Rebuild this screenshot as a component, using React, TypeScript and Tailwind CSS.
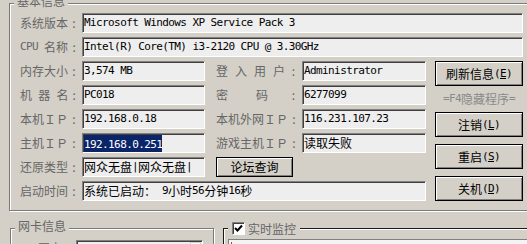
import React from 'react';

const mono = "font-['DejaVu_Sans_Mono',monospace] text-[11px] tracking-[-0.6px]";

function M({ children }: { children: React.ReactNode }) {
  return <span className={mono}>{children}</span>;
}

function Field({ w, children }: { w: string; children?: React.ReactNode }) {
  return (
    <div
      className={`flex h-[20px] shrink-0 items-center overflow-hidden whitespace-pre border border-t-[#808080] border-l-[#808080] border-r-white border-b-white bg-[#eeeeee] pl-[1px] text-[12px] leading-[14px] text-black shadow-[inset_1px_1px_0_#404040] ${w}`}
    >
      {children}
    </div>
  );
}

function Btn({ className, children }: { className: string; children: React.ReactNode }) {
  return (
    <div
      className={`flex shrink-0 items-center justify-center whitespace-pre border border-black bg-[#d4d0c8] text-[12px] leading-[14px] text-black shadow-[inset_1px_1px_0_#fff,inset_-1px_-1px_0_#808080] ${className}`}
    >
      {children}
    </div>
  );
}

// left labels: 60px + 2px gap
function LL({ children }: { children: React.ReactNode }) {
  return (
    <div className="mr-[2px] flex w-[60px] shrink-0 items-center whitespace-pre text-[12px] leading-[14px] text-[#666]">
      {children}
      <span className="ml-auto w-[12px] text-center">:</span>
    </div>
  );
}

// right labels: 84px + 2px gap
function RL({ children }: { children: React.ReactNode }) {
  return (
    <div className="mr-[2px] flex w-[84px] shrink-0 items-center whitespace-pre text-[12px] leading-[14px] text-[#666]">
      {children}
      <span className="ml-auto w-[13px] text-center">:</span>
    </div>
  );
}

function Mn({ k }: { k: string }) {
  return (
    <M>
      (<span className="underline">{k}</span>)
    </M>
  );
}

export default function App() {
  return (
    <div className="relative h-[244px] w-[527px] overflow-hidden bg-[#d4d0c8] font-['Noto_Sans_CJK_SC',sans-serif]">
      <div className="pl-[9px] pt-[3px]">
        {/* 基本信息 */}
        <div className="relative h-[208px] w-[540px] border border-[#7a7a7a] shadow-[inset_1px_1px_0_#fff,1px_1px_0_#fff]">
          <span className="absolute left-[4px] top-[-9px] bg-[#d4d0c8] px-[3px] text-[12px] leading-[12px] text-[#666]">基本信息</span>

          <div className="pl-[10px] pt-[9px]">
            <div className="flex items-center">
              <LL>系统版本</LL>
              <Field w="w-[441px]">
                <M>Microsoft Windows XP Service Pack 3</M>
              </Field>
            </div>
            <div className="mt-[4px] flex items-center">
              <LL>
                <M>CPU </M>名称
              </LL>
              <Field w="w-[441px]">
                <M>Intel(R) Core(TM) i3-2120 CPU @ 3.30GHz</M>
              </Field>
            </div>

            <div className="mt-[4px] flex">
              <div className="flex w-[406px] shrink-0 flex-col gap-[4px]">
                <div className="flex items-center">
                  <LL>内存大小</LL>
                  <Field w="w-[123px]">
                    <M>3,574 MB</M>
                  </Field>
                  <div className="ml-[11px] flex">
                    <RL>
                      <div className="flex w-[69px] justify-between">
                        <span>登</span>
                        <span>入</span>
                        <span>用</span>
                        <span>户</span>
                      </div>
                    </RL>
                  </div>
                  <Field w="w-[124px]">
                    <M>Administrator</M>
                  </Field>
                </div>
                <div className="flex items-center">
                  <LL>
                    <div className="flex w-[50px] justify-between">
                      <span>机</span>
                      <span>器</span>
                      <span>名</span>
                    </div>
                  </LL>
                  <Field w="w-[123px]">
                    <M>PC018</M>
                  </Field>
                  <div className="ml-[11px] flex">
                    <RL>
                      <span>密</span>
                      <span className="ml-[28px]">码</span>
                    </RL>
                  </div>
                  <Field w="w-[124px]">
                    <M>6277099</M>
                  </Field>
                </div>
                <div className="flex items-center">
                  <LL>本机ＩＰ</LL>
                  <Field w="w-[123px]">
                    <M>192.168.0.18</M>
                  </Field>
                  <div className="ml-[11px] flex">
                    <RL>本机外网ＩＰ</RL>
                  </div>
                  <Field w="w-[124px]">
                    <M>116.231.107.23</M>
                  </Field>
                </div>
                <div className="flex items-center">
                  <LL>主机ＩＰ</LL>
                  <Field w="w-[123px]">
                    <span className="bg-[#0a246a] text-white leading-[15px]">
                      <M>192.168.0.251</M>
                    </span>
                  </Field>
                  <div className="ml-[11px] flex">
                    <RL>游戏主机ＩＰ</RL>
                  </div>
                  <Field w="w-[124px]">读取失败</Field>
                </div>
                <div className="flex items-center">
                  <LL>还原类型</LL>
                  <Field w="w-[123px]">
                    网众无盘<M>|</M>网众无盘<M>|</M>
                  </Field>
                  <Btn className="ml-[11px] h-[20px] w-[77px]">论坛查询</Btn>
                </div>
                <div className="flex items-center">
                  <LL>启动时间</LL>
                  <Field w="w-[344px]">
                    系统已启动：<M> 9</M>小时<M>56</M>分钟<M>16</M>秒
                  </Field>
                </div>
              </div>

              <div className="ml-[9px] flex w-[88px] shrink-0 flex-col">
                <Btn className="h-[25px] w-[88px]">
                  刷新信息<Mn k="E" />
                </Btn>
                <div className="flex h-[26px] items-center justify-center whitespace-pre text-[12px] leading-[14px] text-[#8a8a8a]">
                  <M>=F4</M>隐藏程序<M>=</M>
                </div>
                <Btn className="h-[25px] w-[88px]">
                  注销<Mn k="L" />
                </Btn>
                <Btn className="mt-[7px] h-[25px] w-[88px]">
                  重启<Mn k="S" />
                </Btn>
                <Btn className="mt-[7px] h-[25px] w-[88px]">
                  关机<Mn k="D" />
                </Btn>
              </div>
            </div>
          </div>
        </div>

        <div className="mt-[17px] flex">
          {/* 网卡信息 */}
          <div className="relative ml-[1px] h-[40px] w-[204px] shrink-0 border border-[#7a7a7a] shadow-[inset_1px_1px_0_#fff,1px_1px_0_#fff]">
            <span className="absolute left-[4px] top-[-9px] bg-[#d4d0c8] px-[3px] text-[12px] leading-[12px] text-[#666]">网卡信息</span>
            <div className="flex pt-[11px]">
              <span className="ml-[27px] mt-[1px] w-[38px] text-[12px] leading-[14px] text-[#777]">网卡:</span>
              <div className="flex h-[21px] w-[127px] border border-t-[#808080] border-l-[#808080] border-r-white border-b-white bg-[#eeeeee] shadow-[inset_1px_1px_0_#404040]">
                <div className="ml-auto mr-[1px] mt-[1px] h-[17px] w-[11px] border border-[#d4d0c8] bg-[#d4d0c8] shadow-[inset_1px_1px_0_#fff,inset_-1px_-1px_0_#808080]" />
              </div>
            </div>
          </div>

          {/* 实时监控 */}
          <div className="relative ml-[9px] h-[40px] w-[320px] shrink-0 border border-[#1a1a1a] shadow-[inset_1px_1px_0_#fff,1px_1px_0_#fff]">
            <div className="absolute left-[4px] top-[-7px] flex items-center gap-[3px] bg-[#d4d0c8] px-[4px]">
              <div className="flex h-[13px] w-[13px] items-center justify-center border border-t-[#808080] border-l-[#808080] border-r-white border-b-white bg-white shadow-[inset_1px_1px_0_#404040]">
                <svg width="9" height="9" viewBox="0 0 9 9">
                  <path d="M1 4 L3.5 6.5 L8 1.5" fill="none" stroke="#000" strokeWidth="2" />
                </svg>
              </div>
              <span className="text-[12px] leading-[12px] text-[#666]">实时监控</span>
            </div>
            <div className="ml-[4px] mt-[10px] h-[20px] w-[300px] border-l border-t border-[#808080] bg-[#f4f4f4] pl-[2px] pt-[2px]">
              <div className="h-[10px] w-[1px] bg-[#e03030]" />
            </div>
          </div>
        </div>
      </div>
    </div>
  );
}
